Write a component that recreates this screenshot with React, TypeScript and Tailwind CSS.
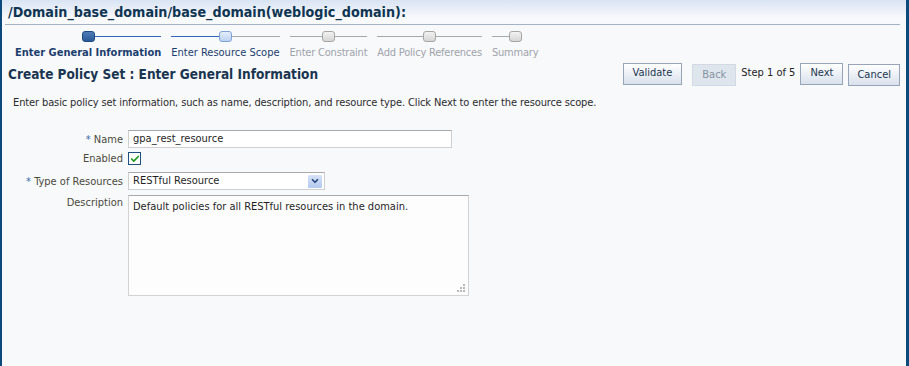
import { Check, ChevronDown } from "lucide-react";

const steps = [
  { label: "Enter General Information", state: "current" },
  { label: "Enter Resource Scope", state: "next" },
  { label: "Enter Constraint", state: "off" },
  { label: "Add Policy References", state: "off" },
  { label: "Summary", state: "off" },
];

const font = "font-['DejaVu_Sans_Condensed','DejaVu_Sans',sans-serif]";

function Stop({ state }: { state: string }) {
  if (state === "current")
    return <div className="w-[13px] h-[11px] rounded-[3px] border border-[#1c4a82] bg-gradient-to-b from-[#4f7cb8] to-[#2a5a98]" />;
  if (state === "next")
    return <div className="w-[13px] h-[11px] rounded-[3px] border border-[#7fa1d8] bg-gradient-to-b from-[#e4eefb] to-[#bcd1f0]" />;
  return <div className="w-[13px] h-[11px] rounded-[3px] border border-[#a6a6a6] bg-gradient-to-b from-[#f2f2f2] to-[#d6d6d6]" />;
}

function Btn({ children, disabled, tight }: { children: string; disabled?: boolean; tight?: boolean }) {
  const pad = tight ? "px-[8px]" : "px-[9px]";
  return (
    <button
      className={
        disabled
          ? `h-[22px] ${pad} border border-[#d3dae3] bg-[#dfe5ec] text-[#8593a3] text-[11px]`
          : `h-[22px] ${pad} border border-[#98a5b8] bg-gradient-to-b from-[#ffffff] to-[#d9e1ec] text-[#1c3550] text-[11px]`
      }
    >
      {children}
    </button>
  );
}

function Label({ children }: { children: React.ReactNode }) {
  return <div className="w-[121px] mr-[5px] shrink-0 text-right leading-[13px] whitespace-nowrap">{children}</div>;
}

export default function App() {
  return (
    <div className={`w-[909px] h-[366px] overflow-hidden bg-[#f8f9fb] border-l-2 border-r-[3px] border-[#0c4a7e] ${font}`}>
      <div className="bg-gradient-to-b from-[#d9e4f3] to-[#f8f9fb] h-[18px]">
        <div className="pl-[6px] pt-[3px] text-[14.2px] leading-[18px] font-bold text-[#0f3552] whitespace-nowrap">
          /Domain_base_domain/base_domain(weblogic_domain):
        </div>
      </div>
      <div className="ml-[3px] mr-[6px] mt-[6px] border-t border-[#a5b2c6]" />

      {/* train */}
      <div className="flex pl-[8px] mt-[6px]">
        {steps.map((s, i) => {
          const leftBlue = i === 1;
          const rightBlue = i === 0;
          return (
            <div key={i} className="flex flex-col items-center px-[5px]">
              <div className="flex items-center w-full h-[11px]">
                <div
                  className={`flex-1 ${i === 0 ? "" : leftBlue ? "border-t border-[#3464b8]" : "border-t border-[#a8a8a8]"}`}
                />
                <Stop state={s.state} />
                <div
                  className={`flex-1 ${i === steps.length - 1 ? "" : rightBlue ? "border-t border-[#3464b8]" : "border-t border-[#a8a8a8]"}`}
                />
              </div>
              <div
                className={`mt-[4px] text-[11px] leading-[14px] whitespace-nowrap ${
                  s.state === "current"
                    ? "font-bold text-[#1c3e6e]"
                    : s.state === "next"
                    ? "text-[#1c3e6e]"
                    : "text-[#9ea3aa] tracking-[-0.2px]"
                }`}
              >
                {s.label}
              </div>
            </div>
          );
        })}
      </div>

      {/* heading + buttons */}
      <div className="flex items-center justify-between pl-[6px] pr-[6px] mt-[1px]">
        <div className="text-[13.5px] font-bold text-[#1a3550] whitespace-nowrap">
          Create Policy Set : Enter General Information
        </div>
        <div className="flex items-center">
          <Btn>Validate</Btn>
          <div className="ml-[10px]">
            <Btn disabled>Back</Btn>
          </div>
          <span className="mx-[5px] text-[11px] text-[#222]">Step 1 of 5</span>
          <Btn>Next</Btn>
          <div className="ml-[5px]">
            <Btn tight>Cancel</Btn>
          </div>
        </div>
      </div>

      <div className="pl-[11px] mt-[10px] text-[11px] leading-[14px] tracking-[-0.12px] text-[#2b2b2b] whitespace-nowrap">
        Enter basic policy set information, such as name, description, and resource type. Click Next to enter the resource scope.
      </div>

      {/* form */}
      <div className="mt-[20px] text-[11px] text-[#4a4a3c]">
        <div className="flex items-center">
          <Label>
            <span className="text-[#3b6aa8]">*</span> Name
          </Label>
          <div className="h-[18px] w-[324px] border border-[#cfcfcf] border-t-[#a9a9a9] bg-white px-[4px] flex items-center text-[#1f1f1f]">
            gpa_rest_resource
          </div>
        </div>

        <div className="flex items-center mt-[4px]">
          <Label>Enabled</Label>
          <div className="w-[13px] h-[13px] border border-[#1f4f7f] bg-white flex items-center justify-center">
            <Check className="w-[10px] h-[10px] text-[#1d9a1d]" strokeWidth={4} />
          </div>
        </div>

        <div className="flex items-center mt-[7px]">
          <Label>
            <span className="text-[#3b6aa8]">*</span> Type of Resources
          </Label>
          <div className="h-[18px] w-[197px] border border-[#cfcfcf] border-t-[#a9a9a9] bg-white pl-[4px] pr-[2px] flex items-center justify-between text-[#1f1f1f]">
            <span>RESTful Resource</span>
            <div className="w-[14px] h-[13px] bg-gradient-to-b from-[#d6e3f7] to-[#b3c9ee] rounded-[1px] flex items-center justify-center">
              <ChevronDown className="w-[10px] h-[10px] text-[#26477a]" strokeWidth={4} />
            </div>
          </div>
        </div>

        <div className="flex items-start mt-[5px]">
          <div className="pt-[1px]">
            <Label>Description</Label>
          </div>
          <div className="relative h-[101px] w-[341px] border border-[#d3d3d3] border-t-[#a9a9a9] bg-[#fdfdfd] px-[4px] py-[3px] text-[#1f1f1f]">
            Default policies for all RESTful resources in the domain.
            <svg className="absolute right-[2px] bottom-[2px]" width="10" height="10" viewBox="0 0 10 10">
              <rect x="7" y="1" width="2" height="2" fill="#b8b8b8" />
              <rect x="4" y="4" width="2" height="2" fill="#b8b8b8" />
              <rect x="7" y="4" width="2" height="2" fill="#b8b8b8" />
              <rect x="1" y="7" width="2" height="2" fill="#b8b8b8" />
              <rect x="4" y="7" width="2" height="2" fill="#b8b8b8" />
              <rect x="7" y="7" width="2" height="2" fill="#b8b8b8" />
            </svg>
          </div>
        </div>
      </div>
    </div>
  );
}
